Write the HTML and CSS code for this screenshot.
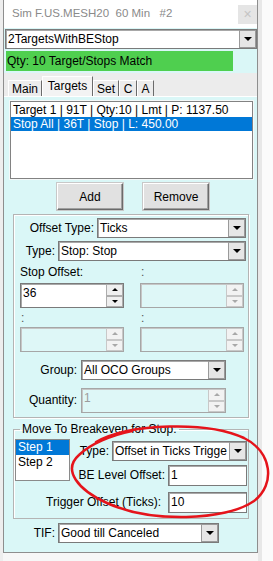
FILE: index.html
```html
<!DOCTYPE html>
<html>
<head>
<meta charset="utf-8">
<link rel="stylesheet" href="styles.css">
</head>
<body>
<div class="desk">
  <div class="edge-left"></div>
  <div class="win">
    <div class="titlebar">
      <span class="title">Sim F.US.MESH20&nbsp; 60 Min &nbsp; #2</span>
      <span class="close">×</span>
    </div>
    <div class="body">
      <div class="combo main-combo"><span class="val">2TargetsWithBEStop</span><span class="arrow"></span></div>
      <div class="status">Qty: 10 Target/Stops Match</div>
      <div class="tabs">
        <span class="tab t-main">Main</span><span class="tab sel t-targets">Targets</span><span class="tab t-set">Set</span><span class="tab t-c">C</span><span class="tab t-a">A</span>
      </div>
      <div class="page">
        <ul class="list">
          <li>Target 1 | 91T | Qty:10 | Lmt | P: 1137.50</li>
          <li class="hl">Stop All | 36T | Stop | L: 450.00</li>
        </ul>
        <div class="btns"><button class="btn">Add</button><button class="btn">Remove</button></div>
        <div class="grp">
          <div class="row r-ot"><span class="lbl w-ot">Offset Type:</span><div class="combo w-ot-c"><span class="val">Ticks</span><span class="arrow"></span></div></div>
          <div class="row r-type"><span class="lbl w-type">Type:</span><div class="combo w-type-c"><span class="val">Stop: Stop</span><span class="arrow"></span></div></div>
          <div class="pair r-lab1"><span class="cap">Stop Offset:</span><span class="cap colon2">:</span></div>
          <div class="pair r-spin1">
            <div class="spin"><span class="val">36</span><span class="sbtns"><span class="sb up"></span><span class="sb down"></span></span></div>
            <div class="spin dis"><span class="val"></span><span class="sbtns"><span class="sb up"></span><span class="sb down"></span></span></div>
          </div>
          <div class="pair r-lab2"><span class="cap colon1">:</span><span class="cap colon2">:</span></div>
          <div class="pair r-spin2">
            <div class="spin dis"><span class="val"></span><span class="sbtns"><span class="sb up"></span><span class="sb down"></span></span></div>
            <div class="spin dis"><span class="val"></span><span class="sbtns"><span class="sb up"></span><span class="sb down"></span></span></div>
          </div>
          <div class="row r-group"><span class="lbl w-grp">Group:</span><div class="combo w-grp-c"><span class="val">All OCO Groups</span><span class="arrow"></span></div></div>
          <div class="row r-qty"><span class="lbl w-grp">Quantity:</span><div class="spin dis w-grp-c"><span class="val gray">1</span><span class="sbtns"><span class="sb up"></span><span class="sb down"></span></span></div></div>
        </div>
        <fieldset class="be">
          <legend>Move To Breakeven for Stop:</legend>
          <div class="begrid">
            <ul class="steps">
              <li class="hl">Step 1</li>
              <li>Step 2</li>
            </ul>
            <div class="berow b1"><span class="lbl2 m3">Type:</span><div class="combo w-be-c"><span class="val">Offset in Ticks Trigge</span><span class="arrow"></span></div></div>
            <div class="berow b2"><span class="lbl2 m3">BE Level Offset:</span><div class="field"><span class="val">1</span></div></div>
            <div class="berow b3"><span class="lbl2 m7">Trigger Offset (Ticks):</span><div class="field"><span class="val">10</span></div></div>
          </div>
        </fieldset>
        <div class="row r-tif"><span class="lbl w-tif">TIF:</span><div class="combo w-tif-c"><span class="val">Good till Canceled</span><span class="arrow"></span></div></div>
      </div>
    </div>
  </div>
  <div class="edge-right"></div>
  <svg class="ink" width="273" height="561" viewBox="0 0 273 561">
    <path d="M 96 442 C 130 423, 208 421, 244 438 C 272 452, 276 484, 254 501 C 226 521, 150 523, 107 503 C 78 490, 62 470, 79 455 C 90 444, 112 435, 132 431" fill="none" stroke="#e5141b" stroke-width="2.5" stroke-linecap="round"/>
  </svg>
</div>
</body>
</html>
```
FILE: styles.css
```css
* { box-sizing: border-box; }
html, body { margin: 0; padding: 0; }
body {
  width: 273px; height: 561px; overflow: hidden;
  background: #f7f7f7;
  font-family: "Liberation Sans", Arial, sans-serif;
  font-size: 12px; color: #000;
}
.desk { position: relative; display: flex; width: 273px; height: 561px; }
.edge-left { width: 3px; height: 561px; background: #eeeeee; }
.edge-right { flex: 1; height: 561px; background: linear-gradient(to right, #e8e8e8 0 4px, #fbfbfb 4px); }
.win {
  width: 255px; height: 553px;
  border: 1px solid #8e8e8e; border-top: 0;
  display: flex; flex-direction: column;
  background: #daf7f7;
}
.titlebar { height: 28px; background: #fff; display: flex; align-items: flex-start; }
.title { margin: 6px 0 0 8px; line-height: 14px; font-size: 11.5px; color: #8a8a8a; white-space: pre; }
.close {
  margin: 5px 0 0 auto; width: 19px; height: 19px; background: #e5e5e5;
  color: #c4c4c4; font-size: 14px; line-height: 18px; text-align: center;
}
.body { flex: 1; display: flex; flex-direction: column; }

.combo {
  display: flex; height: 20px; background: #fff;
  border: 1px solid #7a7a7a; box-shadow: inset 1px 1px 0 #a8a8a8;
}
.combo .val, .field .val, .spin .val {
  flex: 1; padding-left: 2px; line-height: 18px; white-space: nowrap; overflow: hidden;
}
.arrow {
  width: 17px; background: #e6e6e6; border: 1px solid #9a9a9a;
  display: flex; align-items: center; justify-content: center;
}
.arrow::before {
  content: ""; width: 0; height: 0;
  border-left: 4px solid transparent; border-right: 4px solid transparent; border-top: 4px solid #000;
}
.main-combo { margin: 1px 0 0 1px; width: 252px; }

.status {
  margin: 2px 0 0 2px; width: 227px; height: 20px; line-height: 20px;
  padding-left: 1px; background: #4fcf4f;
}
.tabs {
  margin-top: 2px; height: 23px; background: #ececec;
  display: flex; align-items: flex-end; padding-left: 4px;
}
.tab {
  height: 16px; line-height: 14px; padding-top: 1px; text-align: center;
  background: #ececec; border-left: 1px solid #fff; border-top: 1px solid #fff;
  border-right: 1px solid #6b6b6b;
}
.tab.sel { height: 20px; padding-top: 2px; background: #f3f3f3; }
.t-main { width: 34px; }
.t-targets { width: 51px; }
.t-set { width: 26px; }
.t-c { width: 18px; }
.t-a { width: 17px; }

.page { flex: 1; display: flex; flex-direction: column; border-top: 1px solid #fff; padding-top: 4px; }
.list {
  list-style: none; margin: 0 0 0 6px; padding: 1px 0 0 0;
  width: 243px; height: 78px; background: #fff;
  border: 1px solid #828282; box-shadow: 0 0 0 1px #f4f8f8;
}
.list li { line-height: 14px; padding-left: 2px; white-space: nowrap; }
.hl { background: #0078d7; color: #fff; }

.btns { display: flex; gap: 20px; margin: 4px 0 0 53px; }
.btn {
  width: 66px; height: 27px; padding: 0;
  font-family: "Liberation Sans", Arial, sans-serif; font-size: 12px; color: #000;
  background: #e1e1e1; border: 1px solid; border-color: #fff #6b6b6b #6b6b6b #fff;
  box-shadow: inset -1px -1px 0 #a0a0a0, 0 0 0 1px #c8c8c8;
}

.grp {
  margin: 4px 0 0 9px; width: 236px; height: 204px;
  border: 1px solid #b4b4b4; box-shadow: inset 1px 1px 0 #fff, 1px 1px 0 #fff;
}
.row { display: flex; }
.lbl { line-height: 20px; text-align: right; white-space: nowrap; }
.r-ot { margin-top: 3px; height: 20px; }
.w-ot { width: 83px; padding-right: 3px; }
.w-ot-c { width: 149px; }
.r-type { margin-top: 3px; height: 20px; }
.w-type { width: 44px; padding-right: 3px; }
.w-type-c { width: 188px; }
.pair { display: grid; grid-template-columns: 104px 104px; column-gap: 16px; padding-left: 6px; }
.cap { line-height: 14px; white-space: nowrap; }
.colon1, .colon2 { padding-left: 1px; color: #555; }
.r-lab1 { margin-top: 4px; height: 14px; }
.r-spin1 { margin-top: 4px; height: 25px; }
.r-lab2 { margin-top: 3px; height: 14px; }
.r-spin2 { margin-top: 2px; height: 25px; }
.spin {
  display: flex; height: 25px; background: #fff;
  border: 1px solid #7a7a7a; box-shadow: inset 1px 1px 0 #a8a8a8;
}
.spin .val { padding-top: 2px; line-height: 14px; }
.sbtns { width: 17px; display: flex; flex-direction: column; }
.sb {
  flex: 1; background: #efefef; border: 1px solid #adadad;
  display: flex; align-items: center; justify-content: center;
}
.sb.up::before {
  content: ""; border-left: 3px solid transparent; border-right: 3px solid transparent; border-bottom: 3px solid #000;
}
.sb.down::before {
  content: ""; border-left: 3px solid transparent; border-right: 3px solid transparent; border-top: 3px solid #000;
}
.spin.dis { background: #def7f7; border-color: #a6a6a6; box-shadow: inset 1px 1px 0 #c6c6c6; }
.spin.dis .sb { background: #f2f2f2; border-color: #c8c8c8; }
.spin.dis .sb.up::before { border-bottom-color: #a8a8a8; }
.spin.dis .sb.down::before { border-top-color: #a8a8a8; }
.gray { color: #9c9c9c; }
.r-group { margin-top: 8px; height: 20px; }
.w-grp { width: 67px; padding-right: 4px; }
.w-grp-c { width: 145px; }
.r-qty { margin-top: 8px; height: 25px; }
.r-qty .lbl { line-height: 25px; }

.be {
  margin: 4px 0 0 9px; width: 236px; padding: 0; min-width: 0;
  border: 1px solid #b4b4b4; box-shadow: inset 1px 1px 0 #fff;
}
.be legend { margin-left: 6px; padding: 0 2px; line-height: 14px; font-size: 12px; }
.begrid {
  display: grid; grid-template-columns: 56px 1fr; grid-template-rows: 29px 27px 26px;
}
.steps {
  grid-row: 1 / 3; grid-column: 1;
  list-style: none; margin: 3px 0 0 1px; padding: 0;
  width: 55px; height: 42px; background: #fff; border: 1px solid #8a8a8a;
}
.steps li { line-height: 15px; padding-left: 2px; }
.berow { display: flex; justify-content: flex-end; align-items: flex-start; padding-right: 1px; }
.b1 { grid-row: 1; grid-column: 2; padding-top: 5px; }
.b2 { grid-row: 2; grid-column: 2; }
.b3 { grid-row: 3; grid-column: 1 / 3; }
.lbl2 { line-height: 20px; white-space: nowrap; }
.m3 { margin-right: 3px; }
.m7 { margin-right: 7px; }
.w-be-c { width: 135px; }
.field {
  display: flex; width: 79px; height: 21px; background: #fff;
  border: 1px solid #7a7a7a; box-shadow: inset 1px 1px 0 #a8a8a8;
}
.field .val { line-height: 19px; }

.r-tif { margin-top: 4px; height: 20px; }
.w-tif { width: 54px; padding-right: 3px; }
.w-tif-c { width: 161px; }

.ink { position: absolute; left: 0; top: 0; pointer-events: none; }
```
